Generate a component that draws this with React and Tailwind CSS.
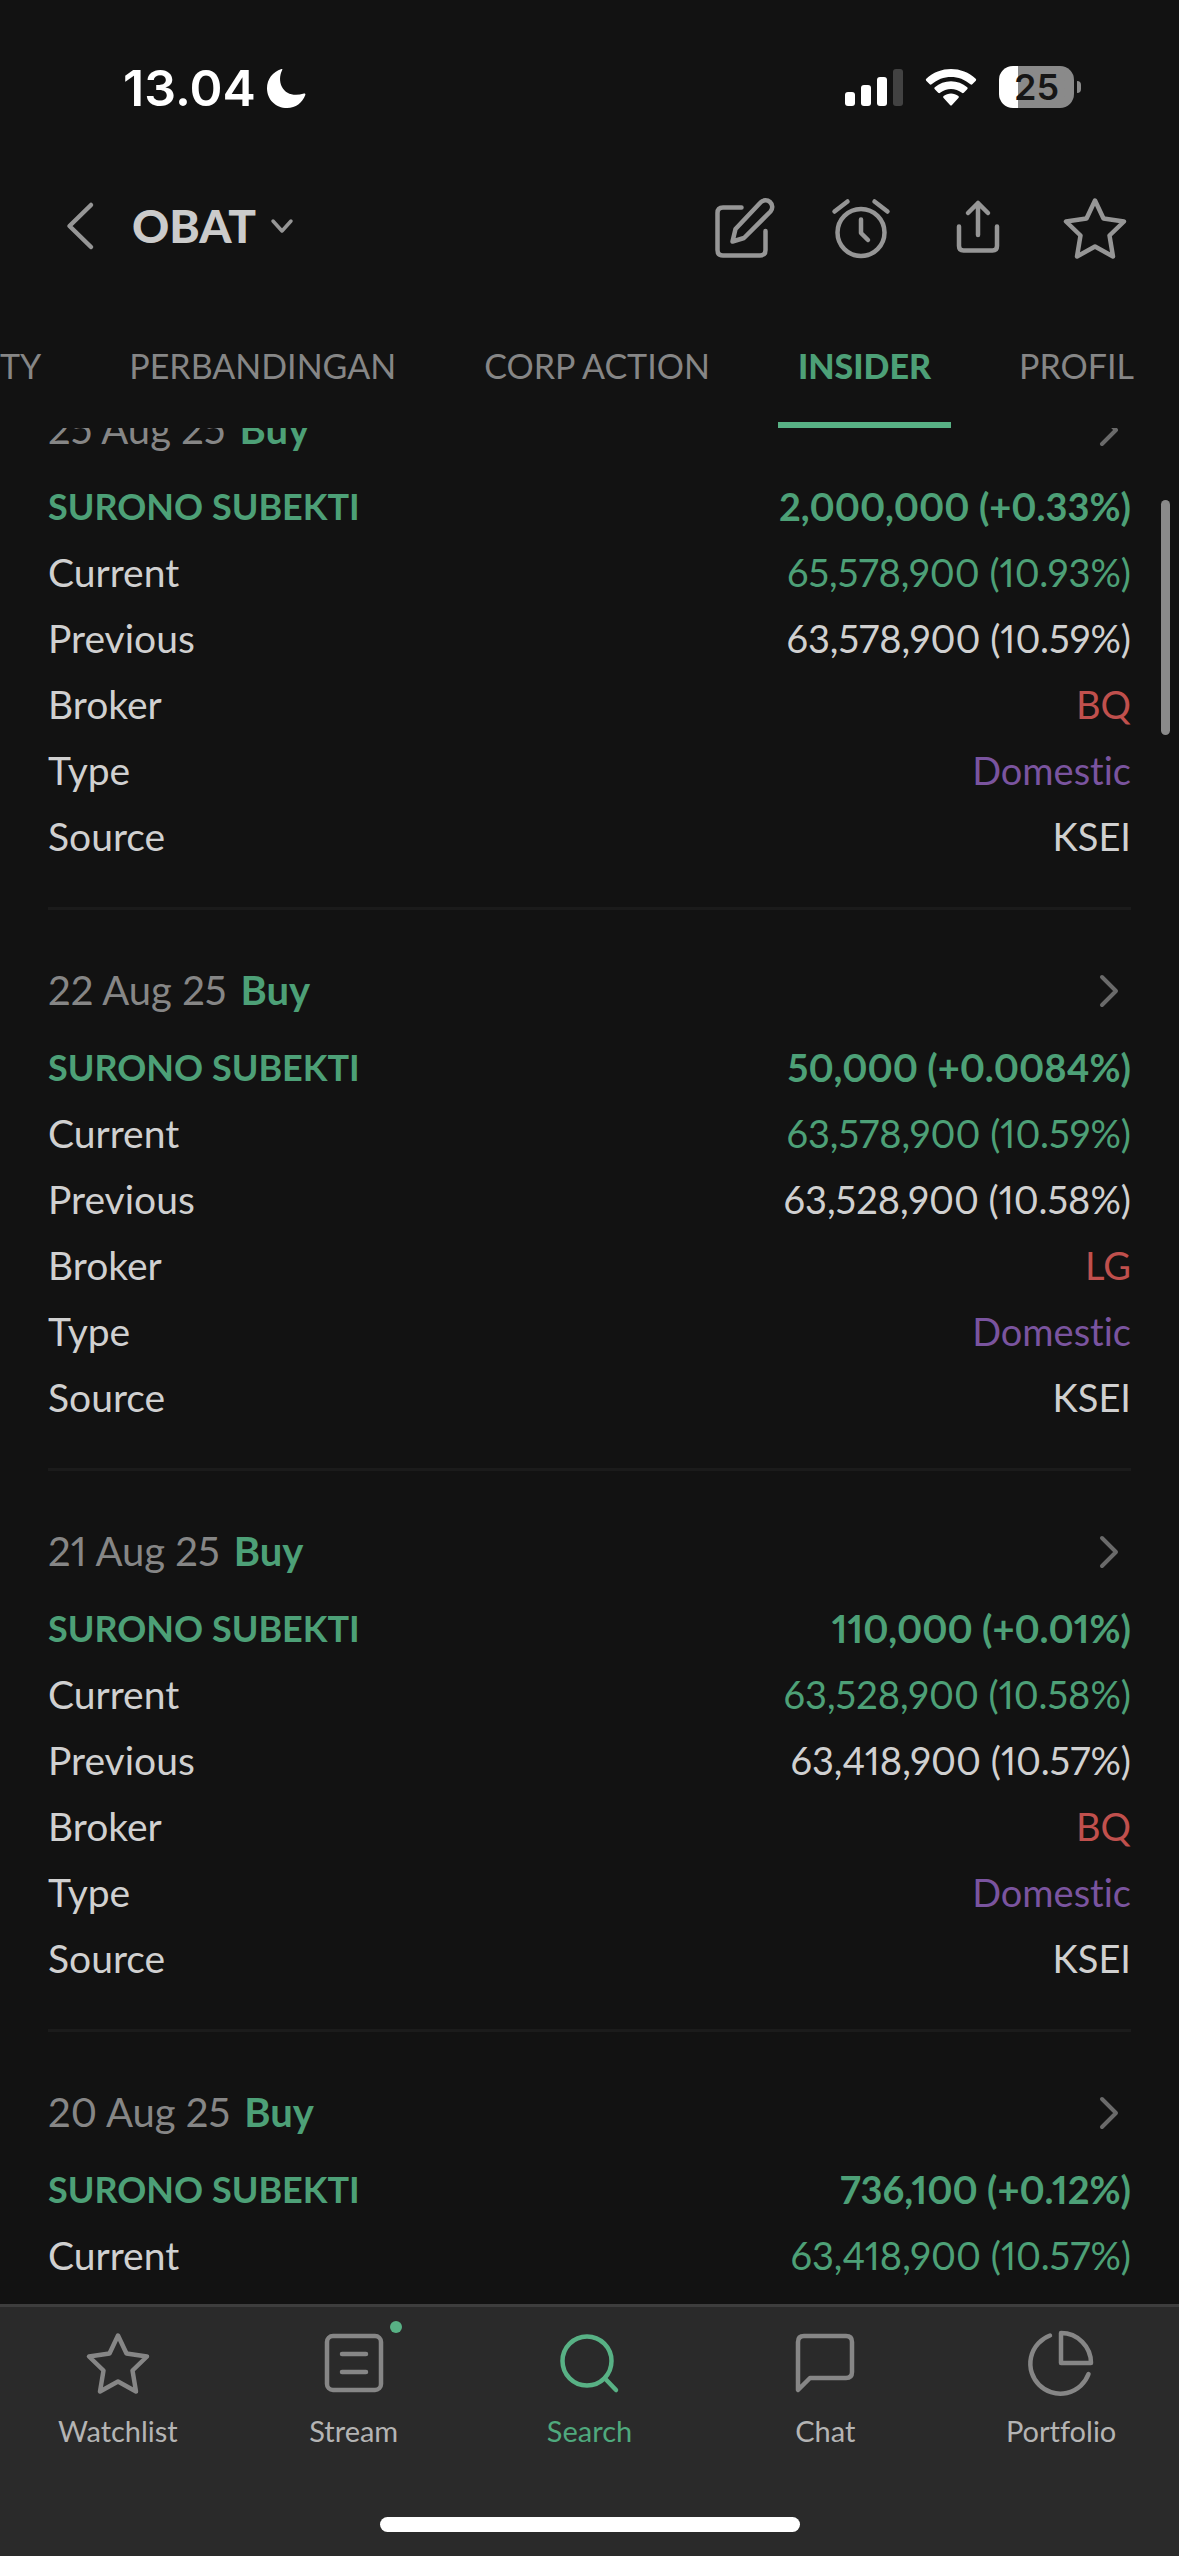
const records = [
  {
    date: "25 Aug 25",
    change: "2,000,000 (+0.33%)",
    rows: [
      ["Current", "65,578,900 (10.93%)"],
      ["Previous", "63,578,900 (10.59%)"],
      ["Broker", "BQ"],
      ["Type", "Domestic"],
      ["Source", "KSEI"],
    ],
  },
  {
    date: "22 Aug 25",
    change: "50,000 (+0.0084%)",
    rows: [
      ["Current", "63,578,900 (10.59%)"],
      ["Previous", "63,528,900 (10.58%)"],
      ["Broker", "LG"],
      ["Type", "Domestic"],
      ["Source", "KSEI"],
    ],
  },
  {
    date: "21 Aug 25",
    change: "110,000 (+0.01%)",
    rows: [
      ["Current", "63,528,900 (10.58%)"],
      ["Previous", "63,418,900 (10.57%)"],
      ["Broker", "BQ"],
      ["Type", "Domestic"],
      ["Source", "KSEI"],
    ],
  },
  {
    date: "20 Aug 25",
    change: "736,100 (+0.12%)",
    rows: [["Current", "63,418,900 (10.57%)"]],
  },
];

const valueColors = {
  Current: "text-[#4da077]",
  Broker: "text-[#c0504d]",
  Type: "text-[#7a549f]",
};

const STAR = "M36 8.5 L44.5 26.5 L65 29.5 L50.5 43.5 L54 64.5 L36 54.5 L18 64.5 L21.5 43.5 L7 29.5 L27.5 26.5 Z";

function Icon({ children, className = "" }) {
  return (
    <svg viewBox="0 0 72 72" className={"size-[72px] shrink-0 " + className} fill="none" stroke="currentColor" strokeWidth="4.5" strokeLinecap="round" strokeLinejoin="round" aria-hidden="true">
      {children}
    </svg>
  );
}

function StatusBar() {
  return (
    <div className="flex h-[138px] shrink-0 items-center justify-between pt-[38px] pr-[98px] pl-[123px] text-white">
      <div className="flex h-full items-start gap-2.5">
        <span className="mt-[25px] font-['Inter',sans-serif] text-[50px] leading-[50px] font-semibold">13.04</span>
        <svg viewBox="0 0 40 40" className="mt-[30px] size-10" fill="currentColor" aria-hidden="true">
          <path d="M15.5 1 C16.2 .7 16.6 1.3 16.2 2 C13.6 7 13.2 13.6 16 19 C19.6 25.8 27.5 28.6 38 25.6 C39 25.3 39.7 26 39.3 27 C36.4 34.8 29.6 40 21.2 40 C9.4 40 1 31.4 1 20.2 C1 11.2 6.6 3.8 15.5 1 Z" />
        </svg>
      </div>
      <div className="flex h-full items-start gap-[22px] pt-7">
        <svg viewBox="0 0 58 42" className="h-[42px] w-[58px]" fill="currentColor" aria-hidden="true">
          <rect x="0" y="26" width="10" height="14" rx="3" />
          <rect x="16" y="19" width="10" height="21" rx="3" />
          <rect x="32" y="11" width="10" height="29" rx="3" />
          <rect x="48" y="3" width="10" height="37" rx="3" fill="#424242" />
        </svg>
        <svg viewBox="0 0 52 42" className="h-[42px] w-[52px]" fill="currentColor" aria-hidden="true">
          <path d="M1.3 12.8 C14.8 -.3 37.2 -.3 50.7 12.8 C51.3 13.4 51.3 14.2 50.8 14.8 L47.3 18.3 C46.7 18.9 46 18.9 45.4 18.3 C34.6 8.4 17.4 8.4 6.6 18.3 C6 18.9 5.3 18.9 4.7 18.3 L1.2 14.8 C.7 14.2 .7 13.4 1.3 12.8 Z" />
          <path d="M9.8 21.2 C18.7 13.1 33.3 13.1 42.2 21.2 C42.8 21.8 42.8 22.6 42.2 23.2 L38.8 26.7 C38.2 27.3 37.5 27.3 36.9 26.7 C30.7 21.6 21.3 21.6 15.1 26.7 C14.5 27.3 13.8 27.3 13.2 26.7 L9.8 23.2 C9.2 22.6 9.2 21.8 9.8 21.2 Z" />
          <path d="M18.6 30 C22.9 26.5 29.1 26.5 33.4 30 C34 30.6 34 31.3 33.4 32 L27 38.9 C26.4 39.6 25.6 39.6 25 38.9 L18.6 32 C18 31.3 18 30.6 18.6 30 Z" />
        </svg>
        <div className="flex items-center gap-[3px]">
          <div className="flex h-[42px] w-[75px] items-center justify-center rounded-[14px] bg-linear-to-r from-white from-25% to-[#8a8a8a] to-25% font-['Inter',sans-serif] text-[36px] leading-[42px] font-semibold text-[#161616]">
            25
          </div>
          <div className="h-3 w-1 rounded-r-full bg-[#8a8a8a]" />
        </div>
      </div>
    </div>
  );
}

function Header() {
  return (
    <header className="flex h-[180px] shrink-0 items-center justify-between pr-12 pl-[60px] text-[#969696]">
      <div className="flex items-center pb-1">
        <button type="button" aria-label="Back" className="mr-[34px]">
          <svg viewBox="0 0 38 50" className="h-[50px] w-[38px]" fill="none" stroke="currentColor" strokeWidth="4.5" strokeLinecap="round" strokeLinejoin="round" aria-hidden="true">
            <path d="M31 4 L9.5 25 L31 46" />
          </svg>
        </button>
        <button type="button" className="flex items-center gap-3.5">
          <span className="text-[46px] leading-[60px] font-black text-[#cbcbcb]">OBAT</span>
          <svg viewBox="0 0 24 16" className="h-4 w-6" fill="none" stroke="currentColor" strokeWidth="3.5" strokeLinecap="round" strokeLinejoin="round" aria-hidden="true">
            <path d="M3 3 L12 13 L21 3" />
          </svg>
        </button>
      </div>
      <div className="flex items-center gap-[45px]">
        <button type="button" aria-label="Write a post">
          <Icon>
            <path d="M33.500 15.500 H15 Q9.500 15.500 9.500 21 V58 Q9.500 63.500 15 63.500 H52 Q57.500 63.500 57.500 58 V39" />
            <path d="M24.500 49.500 L27.500 37 L52.500 10.500 A6.500 6.500 0 0 1 62.500 19.500 L36 46 Z" />
          </Icon>
        </button>
        <button type="button" aria-label="Set price alert">
          <Icon>
            <circle cx="36" cy="40.500" r="23.500" />
            <path d="M36 27.500 V41 L43 48 M9.500 19.500 L22.500 9.500 M62.500 19.500 L49.500 9.500" />
          </Icon>
        </button>
        <button type="button" aria-label="Share">
          <Icon>
            <path d="M36 43 V11 M26 21 L36 11 L46 21 M17 34.500 V54 Q17 58.500 21.500 58.500 H50.500 Q55 58.500 55 54 V34.500" />
          </Icon>
        </button>
        <button type="button" aria-label="Add to watchlist">
          <Icon>
            <path d={STAR} />
          </Icon>
        </button>
      </div>
    </header>
  );
}

function Tabs() {
  const tabs = ["TY", "PERBANDINGAN", "CORP ACTION", "INSIDER", "PROFIL"];
  return (
    <nav className="-ml-5 flex h-[110px] shrink-0 items-stretch gap-12 text-[34px] leading-[48px] whitespace-nowrap">
      {tabs.map((t) =>
        t === "INSIDER" ? (
          <a key={t} href="#insider" aria-current="page" className="border-b-6 border-[#58b185] px-5 pt-6 font-black text-[#4da077]">
            {t}
          </a>
        ) : (
          <a key={t} href="#tab" className="px-5 pt-6 text-[#868686]">
            {t}
          </a>
        )
      )}
    </nav>
  );
}

function Transaction({ record }) {
  return (
    <article className="border-b-3 border-[#1b1b1b] pt-[47px] pb-[38px] text-[#d0d0d0]">
      <a href="#detail" className="mb-[11px] flex h-[66px] items-center justify-between pr-3 text-[40px] leading-[48px]">
        <span className="flex items-center gap-3.5">
          <span className="text-[#868686]">{record.date}</span>
          <span className="font-bold text-[#4da077]">Buy</span>
        </span>
        <svg viewBox="0 0 20 36" className="h-9 w-5 text-[#6a6a6a]" fill="none" stroke="currentColor" strokeWidth="4" strokeLinecap="round" strokeLinejoin="round" aria-hidden="true">
          <path d="M3 5 L17 19 L3 33" />
        </svg>
      </a>
      <div className="flex h-[66px] items-center justify-between leading-[48px] font-bold text-[#4da077]">
        <h2 className="text-[36px]">SURONO SUBEKTI</h2>
        <p className="text-[38px]">{record.change}</p>
      </div>
      <dl className="leading-[48px]">
        {record.rows.map(([label, value]) => (
          <div key={label} className="flex h-[66px] items-center justify-between">
            <dt className="text-[39px]">{label}</dt>
            <dd className={"text-[38px] " + (valueColors[label] || "")}>{value}</dd>
          </div>
        ))}
      </dl>
    </article>
  );
}

function BottomNav() {
  const items = [
    { name: "Watchlist", icon: <path d={STAR} /> },
    {
      name: "Stream",
      dot: true,
      icon: (
        <>
          <rect x="9" y="9" width="54" height="54" rx="6" />
          <path d="M24 27 H48 M24 45 H48" />
        </>
      ),
    },
    {
      name: "Search",
      active: true,
      icon: (
        <>
          <circle cx="34" cy="34" r="24.500" />
          <path d="M52 51.500 L63 63" />
        </>
      ),
    },
    { name: "Chat", icon: <path d="M9 63 V15 Q9 9 15 9 H57 Q63 9 63 15 V45 Q63 51 57 51 H21 Z" /> },
    {
      name: "Portfolio",
      icon: <path d="M36 6 V36 H66 A30 30 0 0 0 36 6 Z M25 8.500 A30 30 0 1 0 63.500 47" />,
    },
  ];
  return (
    <footer className="shrink-0 border-t-3 border-[#3d3d3d] bg-[#2a2a2a] pb-6">
      <nav className="grid grid-cols-5 pt-5">
        {items.map((it) => (
          <a key={it.name} href={"#" + it.name} className={"flex flex-col items-center gap-3 text-[29px] leading-10 " + (it.active ? "text-[#4fa97d]" : "text-[#b4b4b4]")}>
            <span className="relative">
              <Icon className={it.active ? "text-[#58b185]" : "text-[#868686]"}>{it.icon}</Icon>
              {it.dot && <span className="absolute -top-1.5 -right-3 size-3 rounded-full bg-[#58b185]" />}
            </span>
            {it.name}
          </a>
        ))}
      </nav>
      <div className="mx-auto mt-[66px] h-[15px] w-[420px] rounded-full bg-white" />
    </footer>
  );
}

export default function App() {
  return (
    <div className="flex h-screen flex-col overflow-hidden bg-[#121212] font-['Lato',sans-serif] [font-feature-settings:'liga'_0,'pnum'_1]">
      <StatusBar />
      <Header />
      <Tabs />
      <main className="relative min-h-0 flex-1 overflow-hidden px-12">
        <div className="-mt-[79px]">
          {records.map((r) => (
            <Transaction key={r.date} record={r} />
          ))}
        </div>
        <div className="absolute top-[72px] right-[9px] h-[235px] w-[9px] rounded-full bg-[#8a8a8a]" />
      </main>
      <BottomNav />
    </div>
  );
}
